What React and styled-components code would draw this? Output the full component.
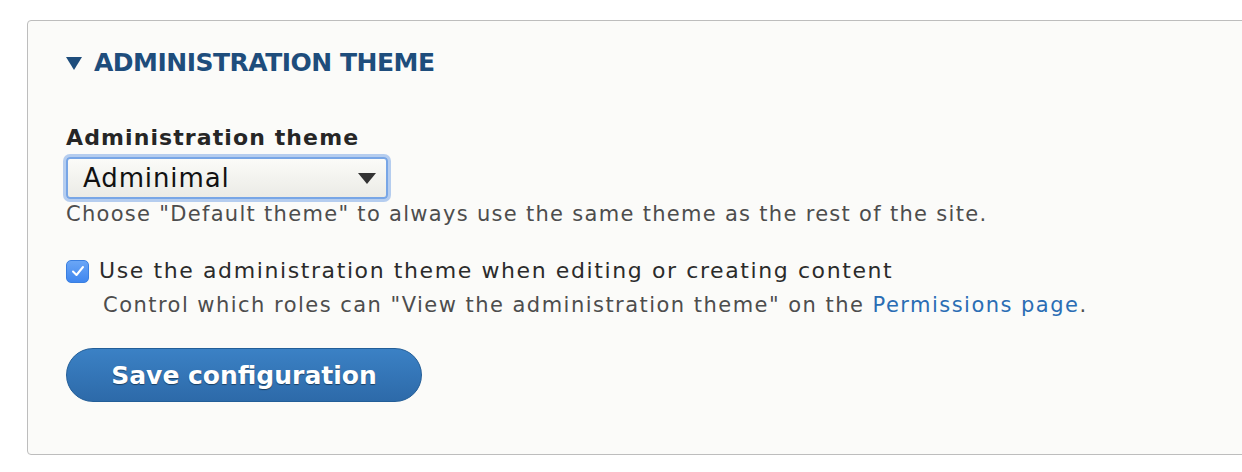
import styled, { createGlobalStyle } from "styled-components";

const GlobalStyle = createGlobalStyle`
  html, body {
    margin: 0;
    padding: 0;
    background: #fff;
    overflow: hidden;
  }
  body {
    font-family: "DejaVu Sans", "Liberation Sans", sans-serif;
    color: #333;
  }
`;

const Page = styled.div`
  padding: 20px 0 0 27px;
`;

const Details = styled.section`
  width: 1300px;
  height: 435px;
  box-sizing: border-box;
  border: 1px solid #bdbdbd;
  border-radius: 4px;
  background: #fbfbf9;
  padding: 27px 0 0 38px;
`;

const Summary = styled.div`
  display: flex;
  align-items: center;
  gap: 12px;
  font-size: 25px;
  line-height: 30px;
  font-weight: bold;
  letter-spacing: -0.5px;
  color: #1e4d7c;
  text-transform: uppercase;
`;

const Caret = styled.span`
  width: 0;
  height: 0;
  border-left: 8px solid transparent;
  border-right: 8px solid transparent;
  border-top: 13px solid #1e4d7c;
`;

const Label = styled.label`
  display: block;
  margin-top: 46px;
  font-size: 22px;
  line-height: 28px;
  font-weight: bold;
  letter-spacing: 1.1px;
  color: #262626;
`;

const SelectBox = styled.div`
  margin-top: 5px;
  width: 322px;
  height: 42px;
  box-sizing: border-box;
  border: 2px solid #78a6e6;
  border-radius: 4px;
  box-shadow: 0 0 0 3px rgba(124, 168, 232, 0.55);
  background: linear-gradient(#fbfbf8, #ebebe6);
  display: flex;
  align-items: center;
  justify-content: space-between;
  padding: 0 10px 0 15px;
  font-size: 26px;
  line-height: 38px;
  letter-spacing: 0.9px;
  color: #111;
`;

const SelectArrow = styled.span`
  width: 0;
  height: 0;
  border-left: 9px solid transparent;
  border-right: 9px solid transparent;
  border-top: 11px solid #333;
`;

const Description = styled.div`
  font-size: 21px;
  line-height: 27px;
  letter-spacing: ${p => p.$spacing || 1.3}px;
  color: #4d4d4d;
  margin-top: ${p => p.$top || 0}px;
  padding-left: ${p => p.$indent || 0}px;
`;

const CheckRow = styled.label`
  display: flex;
  align-items: center;
  gap: 10px;
  margin-top: 29px;
  font-size: 22px;
  line-height: 28px;
  letter-spacing: 1.6px;
  color: #2b2b2b;
`;

const CheckBox = styled.span`
  flex: none;
  width: 23px;
  height: 23px;
  border-radius: 5px;
  background: linear-gradient(#6aa6f6, #3f86ef);
  border: 1px solid #3a7fe0;
  box-sizing: border-box;
  display: flex;
  align-items: center;
  justify-content: center;
`;

const Link = styled.a`
  color: #2a6db4;
  text-decoration: none;
`;

const SaveButton = styled.button`
  margin-top: 29px;
  width: 356px;
  height: 54px;
  border-radius: 27px;
  border: 1px solid #235e98;
  background: linear-gradient(#3b81c5, #2d6aa9);
  color: #fff;
  font-family: "DejaVu Sans", "Liberation Sans", sans-serif;
  font-size: 25px;
  font-weight: bold;
  text-shadow: 0 1px 1px rgba(0, 0, 0, 0.45);
  cursor: pointer;
  padding: 0;
`;

export default function App() {
  return (
    <>
      <GlobalStyle />
      <Page>
        <Details>
          <Summary>
            <Caret />
            Administration theme
          </Summary>

          <Label>Administration theme</Label>
          <SelectBox>
            <span>Adminimal</span>
            <SelectArrow />
          </SelectBox>
          <Description $top={2}>
            Choose "Default theme" to always use the same theme as the rest of the site.
          </Description>

          <CheckRow>
            <CheckBox>
              <svg width="14" height="12" viewBox="0 0 14 12">
                <path d="M2 6.5 L5.5 10 L12 2" fill="none" stroke="#fff" strokeWidth="2" strokeLinecap="round" strokeLinejoin="round" />
              </svg>
            </CheckBox>
            Use the administration theme when editing or creating content
          </CheckRow>
          <Description $top={7} $indent={37} $spacing={1.47}>
            Control which roles can "View the administration theme" on the <Link href="#">Permissions page</Link>.
          </Description>

          <SaveButton>Save configuration</SaveButton>
        </Details>
      </Page>
    </>
  );
}
